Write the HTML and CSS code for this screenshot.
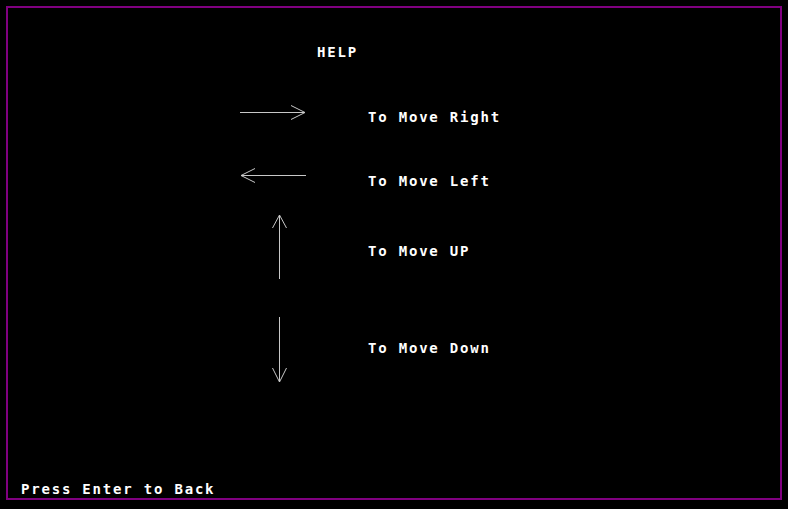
FILE: index.html
```html
<!DOCTYPE html>
<html>
<head>
<meta charset="utf-8">
<link rel="stylesheet" href="styles.css">
</head>
<body>
<div class="frame">
  <div class="title">HELP</div>
  <div class="row row-right">
    <svg class="h-arrow" width="66" height="16" viewBox="0 0 66 16"><path d="M0 8.5H65M51 1.5L65 8.5L51 15.5" fill="none" stroke="#c8c8c8" stroke-width="1"/></svg>
    <span class="label">To Move Right</span>
  </div>
  <div class="row row-left">
    <svg class="h-arrow" width="66" height="16" viewBox="0 0 66 16"><path d="M1 8.5H66M15 1.5L1 8.5L15 15.5" fill="none" stroke="#c8c8c8" stroke-width="1"/></svg>
    <span class="label">To Move Left</span>
  </div>
  <div class="row row-up">
    <svg class="v-arrow" width="16" height="66" viewBox="0 0 16 66"><path d="M8.5 1V65M1.5 14L8.5 1L15.5 14" fill="none" stroke="#c8c8c8" stroke-width="1"/></svg>
    <span class="label">To Move UP</span>
  </div>
  <div class="row row-down">
    <svg class="v-arrow" width="16" height="67" viewBox="0 0 16 67"><path d="M8.5 1V66M1.5 52L8.5 66L15.5 52" fill="none" stroke="#c8c8c8" stroke-width="1"/></svg>
    <span class="label">To Move Down</span>
  </div>
  <div class="footer">Press Enter to Back</div>
</div>
</body>
</html>
```
FILE: styles.css
```css
html, body {
  margin: 0;
  padding: 0;
  background: #000;
  width: 788px;
  height: 509px;
  overflow: hidden;
}
.frame {
  box-sizing: border-box;
  margin: 6px 0 0 6px;
  width: 776px;
  height: 494px;
  border: 2px solid #800080;
  display: flex;
  flex-direction: column;
  font-family: "DejaVu Sans Mono", "Liberation Mono", monospace;
  font-weight: bold;
  font-size: 14px;
  line-height: 16px;
  letter-spacing: 1.8px;
  color: #fff;
}
.title {
  margin-top: 36px;
  padding-left: 309px;
  height: 16px;
}
.row {
  display: flex;
  align-items: flex-start;
  padding-left: 232px;
}
.h-arrow {
  display: block;
  flex: none;
}
.v-arrow {
  display: block;
  flex: none;
  margin-left: 31px;
  margin-right: 19px;
}
.label {
  margin-left: 62px;
  white-space: nowrap;
}
.row-right {
  margin-top: 44px;
  height: 21px;
}
.row-right .label { margin-top: 5px; }
.row-left {
  margin-top: 42px;
  height: 22px;
}
.row-left .label { margin-top: 6px; }
.row-up {
  margin-top: 25px;
  height: 66px;
}
.row-up .label { margin-top: 29px; }
.row-down {
  margin-top: 36px;
  height: 67px;
}
.row-down .label { margin-top: 24px; }
.footer {
  margin-top: auto;
  margin-bottom: 1px;
  padding-left: 13px;
  height: 16px;
}
```
